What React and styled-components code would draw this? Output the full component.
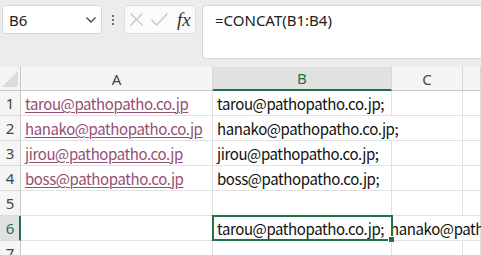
import React from "react";
import styled, { createGlobalStyle, css } from "styled-components";

const Global = createGlobalStyle`
  html, body { margin: 0; padding: 0; background: #ececec; }
  body { font-family: "Noto Sans CJK JP", "Noto Sans", sans-serif; }
`;

const GREEN = "#217346";

const Screen = styled.div`
  width: 481px;
  height: 255px;
  overflow: hidden;
  background: #ececec;
  display: flex;
  flex-direction: column;
  & > * {
    flex-shrink: 0;
  }
`;

const TopBar = styled.div`
  display: flex;
  align-items: flex-start;
  padding: 5px 0 0 2px;
  height: 62px;
  box-sizing: border-box;
`;

const NameBox = styled.div`
  width: 100px;
  height: 29px;
  box-sizing: border-box;
  background: #fff;
  border: 1px solid #d6d6d6;
  border-radius: 4px;
  display: flex;
  align-items: center;
  justify-content: space-between;
  padding: 0 4px 0 6px;
  font-family: "Noto Sans", "Noto Sans CJK JP", sans-serif;
  font-size: 15px;
  color: #222;
`;

const Dots = styled.div`
  width: 22px;
  height: 29px;
  display: flex;
  flex-direction: column;
  align-items: center;
  justify-content: center;
  gap: 2px;
  & > span {
    width: 2px;
    height: 2px;
    background: #444;
    border-radius: 1px;
  }
`;

const FxBox = styled.div`
  width: 72px;
  height: 29px;
  box-sizing: border-box;
  background: #fbfbfb;
  border: 1px solid #dcdcdc;
  border-radius: 4px;
  display: flex;
  align-items: center;
  padding: 0 0 0 5px;
  gap: 8px;
`;

const Fx = styled.span`
  font-family: "Liberation Serif", "DejaVu Serif", serif;
  font-style: italic;
  font-size: 19px;
  color: #333;
  margin-left: 1px;
  line-height: 1;
`;

const FormulaBox = styled.div`
  margin-left: 6px;
  flex: 1;
  height: 54px;
  box-sizing: border-box;
  background: #fff;
  border: 1px solid #d6d6d6;
  border-right: none;
  border-radius: 4px 0 0 4px;
  padding: 3px 0 0 12px;
  font-family: "Noto Sans", "Noto Sans CJK JP", sans-serif;
  font-size: 15px;
  color: #222;
  line-height: 22px;
`;

const Gap = styled.div`
  height: 5px;
`;

const Sheet = styled.div`
  display: grid;
  grid-template-columns: 21px 192px 179px 71px 1fr;
  grid-template-rows: 24px repeat(7, 25px);
  background: #fff;
`;

const HeaderCell = styled.div`
  box-sizing: border-box;
  background: ${(p) => (p.$active ? "#e1e1e1" : "#f5f5f5")};
  border-right: 1px solid #d9d9d9;
  border-bottom: ${(p) => (p.$active ? `2px solid ${GREEN}` : "1px solid #c8c8c8")};
  display: flex;
  align-items: center;
  justify-content: center;
  font-family: "Noto Sans", "Noto Sans CJK JP", sans-serif;
  font-size: 15px;
  color: ${(p) => (p.$active ? GREEN : "#444")};
`;

const Corner = styled.div`
  box-sizing: border-box;
  background: #f5f5f5;
  border-right: 1px solid #c8c8c8;
  border-bottom: 1px solid #c8c8c8;
  position: relative;
  &::after {
    content: "";
    position: absolute;
    right: 2px;
    bottom: 3px;
    width: 0;
    height: 0;
    border-left: 16px solid transparent;
    border-bottom: 16px solid #dcdcdc;
  }
`;

const RowHead = styled.div`
  box-sizing: border-box;
  background: ${(p) => (p.$active ? "#e1e1e1" : "#f5f5f5")};
  border-right: ${(p) => (p.$active ? `2px solid ${GREEN}` : "1px solid #c8c8c8")};
  border-bottom: 1px solid #dadada;
  display: flex;
  align-items: center;
  justify-content: center;
  font-family: "Noto Sans", "Noto Sans CJK JP", sans-serif;
  font-size: 15px;
  color: ${(p) => (p.$active ? GREEN : "#444")};
  padding-left: ${(p) => (p.$active ? "1px" : "0")};
`;

const Cell = styled.div`
  box-sizing: border-box;
  border-right: ${(p) => (p.$open ? "1px solid transparent" : "1px solid #e1e1e1")};
  border-bottom: 1px solid #e1e1e1;
  padding: 0 0 0 4px;
  display: flex;
  align-items: center;
  white-space: pre;
  overflow: visible;
  font-family: "Noto Sans CJK JP", "Noto Sans", sans-serif;
  font-size: 15px;
  letter-spacing: -0.4px;
  word-spacing: 3px;
  color: #111;
  min-width: 0;
  ${(p) =>
    p.$selected &&
    css`
      position: relative;
      z-index: 1;
    `}
`;

const Link = styled.span`
  color: #954f72;
  text-decoration: underline;
  text-underline-offset: 2px;
  text-decoration-thickness: 1px;
`;

const Selection = styled.div`
  position: absolute;
  left: -1px;
  top: -1px;
  right: -2px;
  bottom: -1px;
  border: 2px solid ${GREEN};
  pointer-events: none;
`;

const Handle = styled.div`
  position: absolute;
  right: -3px;
  bottom: -3px;
  width: 5px;
  height: 5px;
  background: ${GREEN};
  border-left: 1px solid #fff;
  border-top: 1px solid #fff;
`;

const IconSvg = styled.svg`
  display: block;
  flex: none;
`;

const emails = ["tarou", "hanako", "jirou", "boss"].map((n) => `${n}@pathopatho.co.jp`);

export default function App() {
  const rows = [1, 2, 3, 4, 5, 6, 7];
  return (
    <Screen>
      <Global />
      <TopBar>
        <NameBox>
          <span>B6</span>
          <IconSvg width="12" height="8" viewBox="0 0 12 8">
            <polyline points="1.5,1.5 6,6 10.5,1.5" fill="none" stroke="#444" strokeWidth="1.3" />
          </IconSvg>
        </NameBox>
        <Dots>
          <span />
          <span />
          <span />
        </Dots>
        <FxBox>
          <IconSvg width="13" height="13" viewBox="0 0 13 13">
            <path d="M0.5 0.5 L12.5 12.5 M12.5 0.5 L0.5 12.5" stroke="#c4c4c4" strokeWidth="1.2" fill="none" />
          </IconSvg>
          <IconSvg width="17" height="13" viewBox="0 0 17 13">
            <polyline points="0.5,6.5 5.5,12 16.5,0.5" fill="none" stroke="#c4c4c4" strokeWidth="1.2" />
          </IconSvg>
          <Fx>fx</Fx>
        </FxBox>
        <FormulaBox>=CONCAT(B1:B4)</FormulaBox>
      </TopBar>
      <Gap />
      <Sheet>
        <Corner />
        <HeaderCell>A</HeaderCell>
        <HeaderCell $active>B</HeaderCell>
        <HeaderCell>C</HeaderCell>
        <HeaderCell />
        {rows.map((r) => {
          const email = emails[r - 1];
          const bText = email ? `${email};` : r === 6 ? "tarou@pathopatho.co.jp; hanako@pathopatho.co.jp; jirou@pathopatho.co.jp; boss@pathopatho.co.jp;" : "";
          return (
            <React.Fragment key={r}>
              <RowHead $active={r === 6}>{r}</RowHead>
              <Cell>{email ? <Link>{email}</Link> : null}</Cell>
              <Cell $open={r === 2 || r === 6} $selected={r === 6}>
                {bText}
                {r === 6 && (
                  <Selection>
                    <Handle />
                  </Selection>
                )}
              </Cell>
              <Cell $open={r === 6} />
              <Cell />
            </React.Fragment>
          );
        })}
      </Sheet>
    </Screen>
  );
}
